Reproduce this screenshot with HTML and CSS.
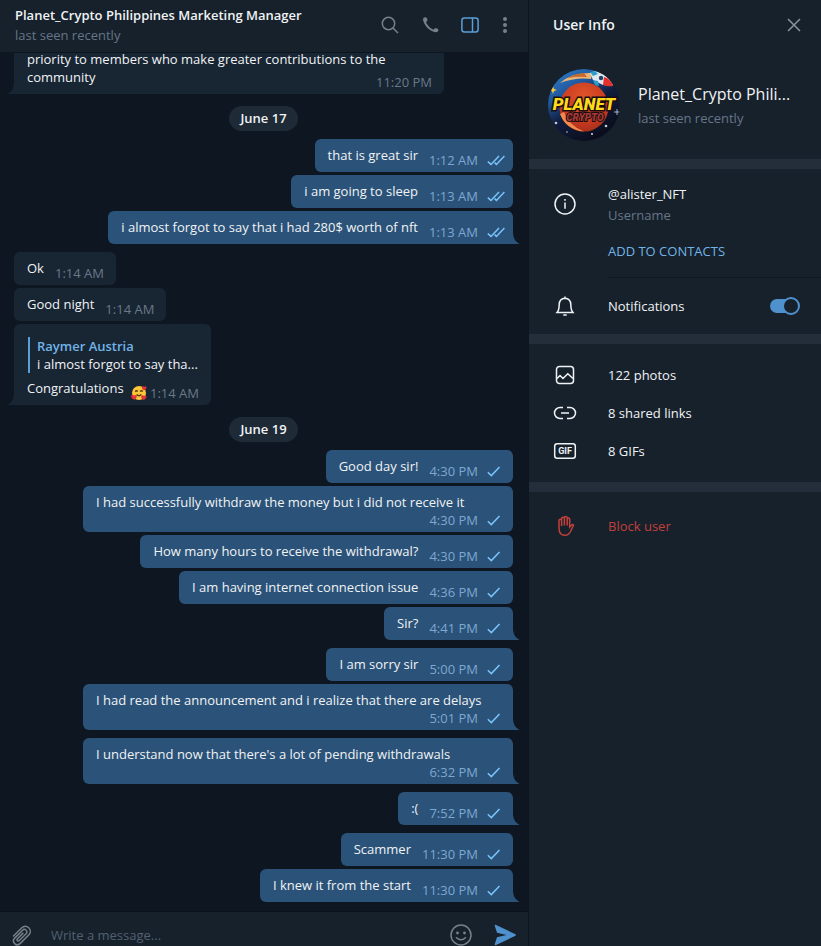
FILE: index.html
```html
<!DOCTYPE html>
<html lang="en">
<head>
  <meta charset="UTF-8" />
  <meta name="viewport" content="width=device-width, initial-scale=1.0" />
  <title>Planet_Crypto Philippines Marketing Manager</title>
  <link rel="stylesheet" href="styles.css">
</head>
<body>
  <!-- shared message icons -->
  <svg class="sprite" aria-hidden="true">
    <symbol id="sent" viewBox="0 0 18 18"><path d="M.8 10.3 4.300 13.600 12.500 5" /></symbol>
    <symbol id="read" viewBox="0 0 18 18"><path d="M.8 10.6 4 13.4 12 5M7.6 11.6 9.4 13.4 17.4 5" /></symbol>
    <symbol id="tail" viewBox="0 0 6 12"><path d="M0 0C0 6 2.500 10 6 11.400L6 12H0Z" /></symbol>
  </svg>

  <div class="app">
    <main class="chat">
      <header class="chat-header">
        <div class="chat-peer">
          <h1 class="chat-title">Planet_Crypto Philippines Marketing Manager</h1>
          <p class="muted">last seen recently</p>
        </div>
        <div class="chat-actions">
          <button class="icon-btn" aria-label="Search">
            <svg width="20" height="20" viewBox="0 0 20 20"><circle cx="8.500" cy="8.500" r="6.200" /><path d="M13 13 18 18" /></svg>
          </button>
          <button class="icon-btn" aria-label="Call">
            <svg width="20" height="20" viewBox="0 0 20 20"><path d="M5.300 2.200C3.400 2.300 2.700 3.800 3.200 5.600C4.600 11 9 15.600 14.400 17C16.400 17.500 18.300 16.900 18.400 15.200C18.400 13.600 16.800 13.200 15.400 13.300C14.400 13.400 13.800 13.900 13.700 14.800C10.600 13.800 7.200 10.200 6 7C7.200 6.500 7.600 5.600 7.400 4.300C7.200 3.200 6.500 2.200 5.300 2.200Z" fill="currentColor" stroke="none" /></svg>
          </button>
          <button class="icon-btn active" aria-label="Toggle info panel">
            <svg width="20" height="20" viewBox="0 0 20 20"><rect x="1.900" y="2.900" width="16.200" height="14.200" rx="2.500" /><path d="M12.500 3V17" /></svg>
          </button>
          <button class="icon-btn slim" aria-label="More">
            <svg width="20" height="20" viewBox="0 0 20 20" class="solid"><circle cx="10" cy="4" r="2" /><circle cx="10" cy="10" r="2" /><circle cx="10" cy="16" r="2" /></svg>
          </button>
        </div>
      </header>

      <section class="log">
        <div class="group in">
          <div class="bubble full stacked tucked last">
            <p class="text">priority to members who make greater contributions to the<br>community</p>
            <span class="meta">11:20 PM</span>
            <svg class="tail"><use href="#tail" /></svg>
          </div>
        </div>

        <div class="date">June 17</div>

        <div class="group out">
          <div class="bubble"><p class="text">that is great sir</p><span class="meta">1:12 AM<svg class="tick"><use href="#read" /></svg></span></div>
          <div class="bubble"><p class="text">i am going to sleep</p><span class="meta">1:13 AM<svg class="tick"><use href="#read" /></svg></span></div>
          <div class="bubble last"><p class="text">i almost forgot to say that i had 280$ worth of nft</p><span class="meta">1:13 AM<svg class="tick"><use href="#read" /></svg></span><svg class="tail"><use href="#tail" /></svg></div>
        </div>

        <div class="group in">
          <div class="bubble"><p class="text">Ok</p><span class="meta">1:14 AM</span></div>
          <div class="bubble"><p class="text">Good night</p><span class="meta">1:14 AM</span></div>
          <div class="bubble reply last">
            <blockquote class="quote">
              <p class="quote-name">Raymer Austria</p>
              <p>i almost forgot to say tha...</p>
            </blockquote>
            <p class="text">Congratulations</p>
            <span class="meta">
              <svg class="emoji" viewBox="0 0 16 16" role="img" aria-label="Smiling face with hearts">
                <circle cx="8" cy="8" r="7" fill="#fbc637" />
                <path d="M4.300 6.700Q5.500 5 6.700 6.500M9.200 6.500Q10.500 5 11.600 6.700M5.500 9.500Q8 12 10.300 9.500" fill="none" stroke="#5b3a18" />
                <path d="M13 5.300C10.500 4 10.300 1.500 11.800 1.200Q12.800 1 13.200 2Q14 .9 15 1.500C16.200 2.400 15 4.600 13 5.300ZM3.300 14.800C0 13.500-.5 10.500 1 9.800Q2.500 9.400 3 10.700Q4 9.500 5.200 10.200C6.500 11.200 5.500 13.800 3.300 14.800ZM12.500 15C9.800 13.700 9.600 11 11 10.300Q12.200 9.900 12.800 11.100Q13.900 9.900 15 10.700C16.200 11.800 14.800 14.200 12.500 15Z" fill="#e2323c" />
              </svg>
              1:14 AM
            </span>
            <svg class="tail"><use href="#tail" /></svg>
          </div>
        </div>

        <div class="date">June 19</div>

        <div class="group out">
          <div class="bubble"><p class="text">Good day sir!</p><span class="meta">4:30 PM<svg class="tick"><use href="#sent" /></svg></span></div>
          <div class="bubble full stacked"><p class="text">I had successfully withdraw the money but i did not receive it</p><span class="meta">4:30 PM<svg class="tick"><use href="#sent" /></svg></span></div>
          <div class="bubble"><p class="text">How many hours to receive the withdrawal?</p><span class="meta">4:30 PM<svg class="tick"><use href="#sent" /></svg></span></div>
          <div class="bubble"><p class="text">I am having internet connection issue</p><span class="meta">4:36 PM<svg class="tick"><use href="#sent" /></svg></span></div>
          <div class="bubble last"><p class="text">Sir?</p><span class="meta">4:41 PM<svg class="tick"><use href="#sent" /></svg></span><svg class="tail"><use href="#tail" /></svg></div>
        </div>

        <div class="group out">
          <div class="bubble"><p class="text">I am sorry sir</p><span class="meta">5:00 PM<svg class="tick"><use href="#sent" /></svg></span></div>
          <div class="bubble full stacked last"><p class="text">I had read the announcement and i realize that there are delays</p><span class="meta">5:01 PM<svg class="tick"><use href="#sent" /></svg></span><svg class="tail"><use href="#tail" /></svg></div>
        </div>

        <div class="group out">
          <div class="bubble full stacked last"><p class="text">I understand now that there's a lot of pending withdrawals</p><span class="meta">6:32 PM<svg class="tick"><use href="#sent" /></svg></span><svg class="tail"><use href="#tail" /></svg></div>
        </div>

        <div class="group out">
          <div class="bubble last"><p class="text">:(</p><span class="meta">7:52 PM<svg class="tick"><use href="#sent" /></svg></span><svg class="tail"><use href="#tail" /></svg></div>
        </div>

        <div class="group out">
          <div class="bubble"><p class="text">Scammer</p><span class="meta">11:30 PM<svg class="tick"><use href="#sent" /></svg></span></div>
          <div class="bubble last"><p class="text">I knew it from the start</p><span class="meta">11:30 PM<svg class="tick"><use href="#sent" /></svg></span><svg class="tail"><use href="#tail" /></svg></div>
        </div>
      </section>

      <form class="composer">
        <button type="button" class="icon-btn" aria-label="Attach file">
          <svg width="24" height="24" viewBox="0 0 24 24"><path d="M3 13.500 11.300 5.200C13.300 3.200 16.300 2.500 18.700 4.700C21 7 20.700 10 18.700 12L10.300 20.400C8.700 22 6.300 22.200 4.700 20.600C3.100 19 3.100 16.700 4.700 15.100L12.600 7.200C13.600 6.200 15.100 6.200 16.100 7.200C17.100 8.200 17.100 9.700 16.100 10.700L9.300 17.500C8.700 18.100 7.900 18.100 7.400 17.600C6.900 17.100 6.900 16.300 7.500 15.700L13.300 9.900" /></svg>
        </button>
        <input class="composer-input" type="text" placeholder="Write a message..." aria-label="Message" />
        <button type="button" class="icon-btn" aria-label="Emoji">
          <svg width="24" height="24" viewBox="0 0 24 24"><circle cx="12" cy="12" r="10" /><circle cx="8.500" cy="10" r="1.400" class="dot" /><circle cx="15.500" cy="10" r="1.400" class="dot" /><path d="M7 14.200Q12 19.500 17 14.200" /></svg>
        </button>
        <button type="submit" class="icon-btn send" aria-label="Send">
          <svg width="24" height="24" viewBox="0 0 24 24" class="solid"><path d="M2.500 1.800 22.500 11.200Q23.300 12 22.500 12.800L2.500 22.200Q1.500 22.300 1.700 21.200L4 14.200 13.500 12 4 9.800 1.700 2.800Q1.500 1.700 2.500 1.800Z" /></svg>
        </button>
      </form>
    </main>

    <aside class="panel">
      <header class="panel-header">
        <h2 class="panel-title">User Info</h2>
        <button class="icon-btn close" aria-label="Close">
          <svg width="20" height="20" viewBox="0 0 20 20"><path d="M4 4 16 16M16 4 4 16" /></svg>
        </button>
      </header>

      <div class="profile">
        <svg class="avatar" viewBox="0 0 72 72" role="img" aria-label="Planet Crypto">
          <defs>
            <clipPath id="round"><circle cx="36" cy="36" r="36" /></clipPath>
            <linearGradient id="sky" x1="0" y1="0" x2=".6" y2="1">
              <stop offset="0" stop-color="#2f86d2" />
              <stop offset=".35" stop-color="#20569c" />
              <stop offset=".6" stop-color="#111d3d" />
              <stop offset="1" stop-color="#0a0d1c" />
            </linearGradient>
            <radialGradient id="mars" cx=".5" cy=".3" r=".8">
              <stop offset="0" stop-color="#e0552a" />
              <stop offset=".6" stop-color="#c93a20" />
              <stop offset="1" stop-color="#9c2c1a" />
            </radialGradient>
          </defs>
          <g clip-path="url(#round)">
            <rect width="72" height="72" fill="url(#sky)" />
            <path d="M8 12Q24-4 46 1L72 22V0H8Z" fill="#101a30" opacity=".7" />
            <path d="M44 4Q24 3 12 14Q28 8 43 10Z" fill="#e8b477" />
            <path d="M36 4Q26 5 20 9Q30 7 39 8Z" fill="#c8682d" />
            <circle cx="36" cy="38" r="24.500" fill="url(#mars)" />
            <path d="M12 45Q18 61 36 62.500Q20 56 16 43Z" fill="#f08a4c" />
            <path d="M42 4 47 2 58 6 65 16 55 16 45 11Z" fill="#dfe9ee" />
            <path d="M56 8Q63 10 65 17Q60 18 55 16Z" fill="#e4322b" />
            <path d="M42 3 47 2 50 5 45 7ZM45 11 50 12 51 17 47 16Z" fill="#2f9dcc" />
            <circle cx="53" cy="9" r="2.200" fill="#24406b" />
            <path d="M5 17 6 20 9 21 6 22 5 25 4 22 1 21 4 20Z" fill="#ffc93a" />
            <path d="M69 40V46M66 43H72" stroke="#c8d5e8" stroke-width=".8" />
            <g fill="#c5cbd9"><circle cx="8" cy="54" r="1.300" /><circle cx="58" cy="57" r="1.300" /><circle cx="44" cy="65" r="1.100" /><circle cx="19" cy="63" r=".8" /></g>
          </g>
          <text class="logo-planet" x="36" y="41">PLANET</text>
          <text class="logo-crypto" x="37" y="52">CRYPTO</text>
        </svg>
        <div class="profile-text">
          <h3 class="profile-name">Planet_Crypto Phili...</h3>
          <p class="muted">last seen recently</p>
        </div>
      </div>

      <section class="block">
        <div class="row about">
          <svg class="row-icon" viewBox="0 0 24 24"><circle cx="12" cy="12" r="10" /><path d="M12 10.500V16.800M12 7V8.800" /></svg>
          <div class="about-text">
            <p>@alister_NFT</p>
            <p class="muted">Username</p>
            <button class="link-btn">ADD TO CONTACTS</button>
          </div>
        </div>
        <div class="row notify">
          <svg class="row-icon" viewBox="0 0 24 24"><path d="M4 18.500Q6.200 16 6.200 10.500Q6.400 4.700 12 4.300Q17.600 4.700 17.800 10.500Q17.800 16 20 18.500ZM12 2.500V4M10.300 21H13.700" /></svg>
          <label for="notify">Notifications</label>
          <input class="toggle" type="checkbox" id="notify" checked />
        </div>
      </section>

      <section class="block media">
        <a class="row" href="#photos">
          <svg class="row-icon" viewBox="0 0 24 24"><rect x="3.500" y="3.500" width="17" height="17" rx="3" /><path d="M4 15.500 7 12.500 10 15.500 14.800 10.800 20 15.500" /></svg>
          <span>122 photos</span>
        </a>
        <a class="row" href="#links">
          <svg class="row-icon" viewBox="0 0 24 24"><path d="M10 6.500H7A5.500 5.500 0 0 0 7 17.500H10M14 6.500H17A5.500 5.500 0 0 1 17 17.500H14M8 12H16" /></svg>
          <span>8 shared links</span>
        </a>
        <a class="row" href="#gifs">
          <svg class="row-icon" viewBox="0 0 24 24"><rect x="1.700" y="4.700" width="20.600" height="14.600" rx="2.500" /><text class="gif-label" x="12" y="15">GIF</text></svg>
          <span>8 GIFs</span>
        </a>
      </section>

      <section class="block">
        <button class="row danger">
          <svg class="row-icon" viewBox="0 0 24 24"><path d="M6 14V6.700Q6 5.300 7.200 5.300T8.600 6.700V12M8.600 11V4.500Q8.700 3.200 10 3.200T11.400 4.500V11.500M11.400 11V3.800Q11.500 2.500 12.800 2.500T14.200 3.800V11.500M14.200 11V5.200Q14.300 4 15.500 4T16.700 5.200V13L18.500 11Q20 10 20.500 11.300L17.500 17.500Q15.500 21.300 12 21.300Q6 21.300 6 14" /></svg>
          <span>Block user</span>
        </button>
      </section>
    </aside>
  </div>
</body>
</html>
```

FILE: styles.css
```css
*, *::before, *::after {
  box-sizing: border-box;
}

html, body {
  margin: 0;
  padding: 0;
  height: 100%;
  overflow: hidden;
  background: #0e1621;
}

body, button, input {
  font-family: "Open Sans", "Noto Sans", sans-serif;
  font-size: 13px;
  line-height: 18px;
  color: #f0f3f5;
}

h1, h2, h3, p, blockquote {
  margin: 0;
}

button {
  padding: 0;
  border: none;
  background: none;
  cursor: pointer;
}

svg {
  display: block;
  flex: none;
  fill: none;
  stroke: currentColor;
  stroke-width: 1.5;
}

.sprite {
  position: absolute;
  width: 0;
  height: 0;
}

.solid {
  fill: currentColor;
  stroke: none;
}

.muted {
  color: #667588;
}

/* the bottom edge of the composer runs past the window */
.app {
  display: flex;
  height: calc(100vh + 12px);
}

.chat {
  flex: 1;
  min-width: 0;
  display: flex;
  flex-direction: column;
}

/* header */
.chat-header {
  display: flex;
  align-items: flex-start;
  justify-content: space-between;
  flex: none;
  padding: 6px 12px 8px 15px;
  background: #17212b;
  border-bottom: 1px solid #0d151e;
}

.chat-peer {
  display: flex;
  flex-direction: column;
  gap: 2px;
  min-width: 0;
}

.chat-title {
  font-size: 13px;
  font-weight: 600;
  white-space: nowrap;
}

.chat-actions {
  display: flex;
  gap: 20px;
  padding-top: 9px;
}

.icon-btn {
  display: flex;
  align-items: center;
  justify-content: center;
  flex: none;
  color: #768088;
}

.icon-btn.active {
  color: #5b9fd9;
}

.icon-btn.slim {
  width: 22px;
  margin-left: -6px;
}

/* messages */
.log {
  flex: 1;
  min-height: 0;
  display: flex;
  flex-direction: column;
  justify-content: flex-end;
  overflow: hidden;
  padding: 0 15px 9px 14px;
}

.group {
  display: flex;
  flex-direction: column;
  flex: none;
  gap: 3px;
  margin-top: 8px;
}

.in {
  align-items: flex-start;
}

.out {
  align-items: flex-end;
}

.bubble {
  position: relative;
  display: flex;
  align-items: flex-end;
  justify-content: space-between;
  column-gap: 11px;
  max-width: 430px;
  padding: 7px 12px 3px 13px;
  border-radius: 6px;
  background: #182533;
}

.out .bubble {
  padding-right: 8px;
  background: #2b5278;
}

.full {
  width: 430px;
}

.text {
  padding-bottom: 5px;
}

.stacked {
  flex-direction: column;
}

.stacked .text {
  align-self: flex-start;
  padding-bottom: 0;
}

/* time sits beside a short last line */
.tucked .meta {
  margin-top: -13px;
}

.meta {
  display: flex;
  align-items: center;
  color: #6a7889;
  white-space: nowrap;
}

.out .meta {
  color: #7da8d3;
}

.tick {
  width: 18px;
  height: 18px;
  margin-left: 9px;
  color: #79c4fc;
}

.last {
  border-bottom-right-radius: 0;
}

.in .last {
  border-bottom-right-radius: 6px;
  border-bottom-left-radius: 0;
}

.tail {
  position: absolute;
  left: 100%;
  bottom: 0;
  width: 6px;
  height: 12px;
  fill: #2b5278;
  stroke: none;
}

.in .tail {
  left: auto;
  right: 100%;
  fill: #182533;
  transform: scaleX(-1);
}

.reply {
  flex-wrap: wrap;
  column-gap: 4px;
  width: 197px;
  padding-top: 13px;
}

.quote {
  width: 100%;
  margin: 0 0 6px 1px;
  padding-left: 7px;
  border-left: 2px solid #5b9fd9;
  white-space: nowrap;
}

.reply .quote {
  flex: 0 0 calc(100% - 1px);
}

.quote-name {
  font-weight: 600;
  color: #71b4e8;
}

.reply .meta {
  gap: 3px;
}

.emoji {
  width: 16px;
  height: 16px;
  stroke: none;
}

.date {
  flex: none;
  align-self: center;
  margin-top: 12px;
  padding: 3px 11px 4px;
  border-radius: 13px;
  background: #1e2a36;
  font-weight: 600;
}

/* composer */
.composer {
  display: flex;
  align-items: center;
  flex: none;
  gap: 20px;
  height: 47px;
  padding: 0 11px 0 10px;
  background: #17212b;
  border-top: 1px solid #0a121a;
}

.composer-input {
  flex: 1;
  min-width: 0;
  padding: 0;
  margin-left: -3px;
  border: none;
  outline: none;
  background: none;
}

.composer-input::placeholder {
  color: #526072;
}

.dot {
  fill: currentColor;
  stroke: none;
}

.send {
  color: #4f91cd;
}

/* info panel */
.panel {
  flex: none;
  width: 293px;
  background: #17212b;
  border-left: 1px solid #0d151e;
}

.panel-header {
  display: flex;
  align-items: center;
  justify-content: space-between;
  height: 50px;
  padding: 0 17px 0 24px;
}

.panel-title {
  font-size: 14px;
  font-weight: 600;
}

.close {
  color: #8a949d;
}

.profile {
  display: flex;
  align-items: center;
  gap: 18px;
  padding: 19px 19px 18px;
}

.avatar {
  width: 72px;
  height: 72px;
  stroke: none;
}

.logo-planet,
.logo-crypto {
  font-family: "Roboto", sans-serif;
  font-weight: 900;
  font-style: italic;
  text-anchor: middle;
  paint-order: stroke;
  stroke: #1a0d12;
}

.logo-planet {
  font-size: 17px;
  fill: #ffd91c;
  stroke-width: 3px;
}

.logo-crypto {
  font-size: 10px;
  fill: #a83a35;
  stroke-width: 2px;
}

.profile-text {
  display: flex;
  flex-direction: column;
  gap: 4px;
  min-width: 0;
  padding-bottom: 1px;
}

.profile-name {
  font-size: 16px;
  font-weight: 500;
  line-height: 22px;
  white-space: nowrap;
}

.block {
  border-top: 10px solid #232e3a;
}

.row {
  display: flex;
  align-items: center;
  gap: 31px;
  width: 100%;
  height: 38px;
  padding: 0 21px 0 24px;
  color: #f0f3f5;
  text-align: left;
  text-decoration: none;
}

.row-icon {
  width: 24px;
  height: 24px;
}

.about {
  align-items: flex-start;
  height: auto;
  padding-top: 16px;
  padding-right: 0;
}

.about .row-icon {
  margin-top: 7px;
}

.about-text {
  flex: 1;
  padding-bottom: 17px;
  border-bottom: 1px solid #101922;
}

.about-text .muted {
  margin-top: 3px;
}

.link-btn {
  margin-top: 18px;
  color: #71b4e8;
}

.notify {
  height: 56px;
}

.notify label {
  flex: 1;
}

.toggle {
  appearance: none;
  display: grid;
  align-items: center;
  width: 30px;
  height: 18px;
  margin: 0;
  cursor: pointer;
}

.toggle::before,
.toggle::after {
  content: "";
  grid-area: 1 / 1;
}

.toggle::before {
  width: 26px;
  height: 14px;
  border-radius: 7px;
  background: #4f91cd;
}

.toggle::after {
  justify-self: end;
  width: 18px;
  height: 18px;
  border: 2px solid #4f91cd;
  border-radius: 50%;
  background: #17212b;
}

.media {
  padding: 12px 0;
}

.gif-label {
  font-family: "Roboto", sans-serif;
  font-size: 9px;
  font-weight: 700;
  text-anchor: middle;
  fill: currentColor;
  stroke: none;
}

.danger {
  height: 68px;
  color: #c2403b;
}
```
